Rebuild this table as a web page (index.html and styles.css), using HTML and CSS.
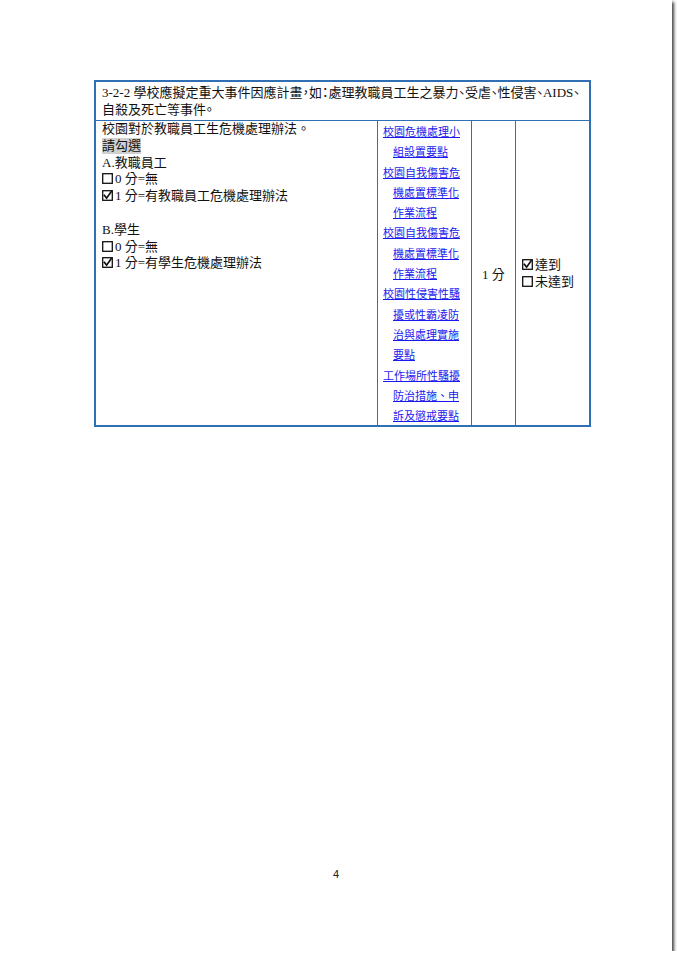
FILE: index.html
```html
<!DOCTYPE html>
<html lang="zh-Hant">
<head>
<meta charset="utf-8">
<title>4</title>
<link rel="stylesheet" href="styles.css">
</head>
<body>
<div class="page">
  <table class="sheet">
    <colgroup>
      <col class="c1"><col class="c2"><col class="c3"><col class="c4">
    </colgroup>
    <tr>
      <td class="head" colspan="4"><span class="ln">3-2-2 學校應擬定重大事件因應計畫，如：處理教職員工生之暴力、受虐、性侵害、AIDS、</span><br><span class="ln">自殺及死亡等事件。</span></td>
    </tr>
    <tr>
      <td class="desc">
        <div>校園對於教職員工生危機處理辦法。</div>
        <div><span class="mark">請勾選</span></div>
        <div>A.教職員工</div>
        <div><svg class="box" viewBox="0 0 11 11" aria-label="☐"><rect x="0.7" y="0.7" width="9.6" height="9.6"/></svg>0 分=無</div>
        <div><svg class="box" viewBox="0 0 11 11" aria-label="☑"><rect x="0.7" y="0.7" width="9.6" height="9.6"/><path d="M2.4 5.4 L4.6 8.2 L9.2 1.8"/></svg>1 分=有教職員工危機處理辦法</div>
        <div class="blank">&nbsp;</div>
        <div>B.學生</div>
        <div><svg class="box" viewBox="0 0 11 11" aria-label="☐"><rect x="0.7" y="0.7" width="9.6" height="9.6"/></svg>0 分=無</div>
        <div><svg class="box" viewBox="0 0 11 11" aria-label="☑"><rect x="0.7" y="0.7" width="9.6" height="9.6"/><path d="M2.4 5.4 L4.6 8.2 L9.2 1.8"/></svg>1 分=有學生危機處理辦法</div>
      </td>
      <td class="refs">
        <a href="#">校園危機處理小組設置要點</a>
        <a href="#">校園自我傷害危機處置標準化作業流程</a>
        <a href="#">校園自我傷害危機處置標準化作業流程</a>
        <a href="#">校園性侵害性騷擾或性霸凌防治與處理實施要點</a>
        <a href="#">工作場所性騷擾防治措施、申訴及懲戒要點</a>
      </td>
      <td class="score">1 分</td>
      <td class="result">
        <div><svg class="box" viewBox="0 0 11 11" aria-label="☑"><rect x="0.7" y="0.7" width="9.6" height="9.6"/><path d="M2.4 5.4 L4.6 8.2 L9.2 1.8"/></svg>達到</div>
        <div><svg class="box" viewBox="0 0 11 11" aria-label="☐"><rect x="0.7" y="0.7" width="9.6" height="9.6"/></svg>未達到</div>
      </td>
    </tr>
  </table>
  <div class="pageno">4</div>
</div>
</body>
</html>
```

FILE: styles.css
```css
html, body {
  margin: 0;
  padding: 0;
  background: #ffffff;
}

.page {
  position: relative;
  width: 672px;
  height: 951px;
  background: #ffffff;
  box-shadow: 2px 2px 3px rgba(0, 0, 0, 0.75);
  box-sizing: border-box;
  padding: 80px 0 0 94px;
  font-family: "Liberation Serif", "Noto Sans CJK TC", serif;
  color: #111;
}

.sheet {
  table-layout: fixed;
  width: 497px;
  border-collapse: separate;
  border-spacing: 0;
  border: 2px solid #2f6fb3;
  font-size: 13px;
}

.c1 { width: 282px; }
.c2 { width: 94px; }
.c3 { width: 44px; }
.c4 { width: 73px; }

.sheet td {
  padding: 0;
  vertical-align: top;
  border-color: #2f6fb3;
  border-style: solid;
  border-width: 0 1px 0 0;
}

.sheet td.head {
  border-width: 0 0 1px 0;
  height: 39px;
  padding: 2px 0 0 6px;
  line-height: 17px;
  font-feature-settings: "halt";
  box-sizing: border-box;
}

.head .ln {
  white-space: nowrap;
}

.sheet td.desc {
  padding: 0 4px 0 6px;
  line-height: 16.8px;
}

.mark {
  display: inline-block;
  background: #d0d0d0;
  line-height: 16px;
}

.box {
  display: inline-block;
  width: 11px;
  height: 11px;
  margin-right: 2px;
  vertical-align: -1px;
  fill: none;
  stroke: #111;
}

.box rect {
  stroke-width: 1.3;
}

.box path {
  stroke-width: 1.7;
  stroke-linecap: square;
}

.sheet td.refs {
  padding: 0 5px;
  font-size: 11px;
  line-height: 20.3px;
  font-family: "Noto Sans CJK TC", sans-serif;
}

.refs a {
  display: block;
  color: #1a1aee;
  text-decoration: underline;
  padding-left: 10px;
  text-indent: -10px;
}

.sheet td.score {
  vertical-align: middle;
  text-align: center;
}

.sheet td.result {
  border-right-width: 0;
  vertical-align: middle;
  padding-left: 6px;
  line-height: 17px;
}

.pageno {
  position: absolute;
  left: 333px;
  top: 868px;
  font-family: "Liberation Sans", sans-serif;
  font-size: 11px;
  color: #222;
}
```
